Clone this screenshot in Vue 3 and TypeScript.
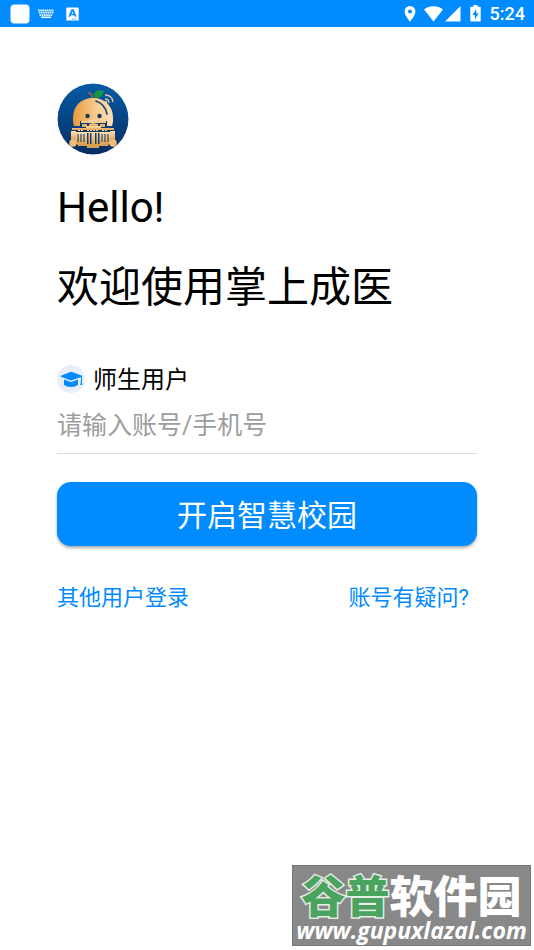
<script setup lang="ts">
import { ref } from 'vue'

const account = ref<string>('')
const columns: number[] = [21, 24, 27, 45, 48, 51]
</script>

<template>
  <div class="screen">
    <header class="status">
      <div class="status-group left">
        <svg width="20" height="20" viewBox="0 0 20 20" aria-hidden="true"><rect x="0.5" y="0.5" width="19" height="19" rx="4" fill="#fff" /></svg>
        <svg width="16" height="10" viewBox="0 0 16 10" aria-hidden="true">
          <g stroke="#fff" stroke-width="1.7" stroke-dasharray="1.7 .5" opacity=".9">
            <path d="M0 1.3h16M.8 3.7h14.6M1.5 6.1h13.2" />
          </g>
          <path d="M3 8.3h10" stroke="#fff" stroke-width="1.5" />
        </svg>
        <svg class="letter" width="13" height="14" viewBox="0 0 13 14" aria-hidden="true">
          <rect x="0.3" y="0.4" width="12.4" height="13.2" rx=".7" fill="#fff" />
          <path d="M3.3 9.7 6 3.2h1l2.7 6.5M4.4 7.5h4.2" fill="none" stroke="#008bff" stroke-width="1.7" />
          <path d="M6 12h5" stroke="#008bff" stroke-width=".8" stroke-dasharray="1 .5" />
        </svg>
      </div>
      <div class="status-group right">
        <svg width="12" height="16" viewBox="0 0 12 16" aria-hidden="true"><path fill="#fff" fill-rule="evenodd" d="M6 0a5.4 5.4 0 0 0-5.4 5.5C.6 9.5 6 15.7 6 15.7s5.4-6.2 5.4-10.2A5.4 5.4 0 0 0 6 0Zm0 3.5a2 2 0 1 1 0 4 2 2 0 0 1 0-4Z" /></svg>
        <svg width="38" height="16" viewBox="0 0 38 16" aria-hidden="true">
          <path fill="#fff" d="M0 3.500c5-4.300 14-4.300 19 0L9.500 15.500ZM36.500 0v15.500H21Z" />
        </svg>
        <svg width="12" height="17" viewBox="0 0 12 17" aria-hidden="true">
          <path fill="#fff" fill-rule="evenodd" d="M3.500 0h4v1.700H10q.7 0 .7.8v13.300q0 .8-.7.8H1q-.7 0-.7-.8V2.500q0-.8.7-.8h2.500ZM6.200 4 2.500 10h2.400v4.500L8.600 8.300H6.200Z" />
        </svg>
        <time>5:24</time>
      </div>
    </header>

    <main class="content">
      <svg class="logo" width="72" height="72" viewBox="0 0 72 72" role="img" aria-label="掌上成医">
        <defs>
          <linearGradient id="sky" x2="0" y2="1"><stop stop-color="#075ba7" /><stop offset="1" stop-color="#052d62" /></linearGradient>
          <linearGradient id="peel"><stop stop-color="#e79a38" /><stop offset=".55" stop-color="#f8c98d" /><stop offset="1" stop-color="#ffdfb4" /></linearGradient>
          <linearGradient id="wall" x2="0" y2="1"><stop stop-color="#ffe1b5" /><stop offset="1" stop-color="#e3a04f" /></linearGradient>
        </defs>
        <circle cx="36" cy="36" r="35.500" fill="url(#sky)" />
        <path d="M17 43c-1-3-1-5-1-8 0-12 8-20 20-20s20 8 20 20c0 3 0 5-1 8Z" fill="url(#peel)" />
        <path d="M31 10q4 0 4 5" fill="none" stroke="#a36239" stroke-width="1.500" />
        <path d="M36 14c1-6 5-8 11-6-1 5-5 9-11 6Z" fill="#159447" />
        <path d="M48 16q4 0 4 4M48 12q7 0 8 7" fill="none" stroke="#e8c69b" stroke-width="1.300" />
        <circle cx="49" cy="19" r="1.200" fill="#e8c69b" />
        <path d="M39 18q9 3 11 13" fill="none" stroke="#14457d" stroke-width="1.700" stroke-linecap="round" />
        <circle cx="30.500" cy="33" r="2.200" fill="#17375f" /><circle cx="42.500" cy="33" r="2.200" fill="#17375f" />
        <path d="M23 38h27v7H23Z" fill="#0a3a73" />
        <path d="M24 38h7l5-1.500L41 38h8v2H24Zm1 3h5v3h-5Zm18 0h5v3h-5ZM32 41l4-1 5 1v2h-9Z" fill="url(#wall)" />
        <path d="M15 45h14v-2h15v2h13v2H15Z" fill="url(#wall)" />
        <path d="M17 47h38v3H17Z" fill="#0b3563" />
        <path d="M18 49h36v12H18Z" fill="url(#wall)" />
        <path d="M21 47.500h6m3 0h12m3 0h6" stroke="#f7cf96" stroke-dasharray="2 1" />
        <g stroke="#123e70" stroke-width="1.100"><path v-for="x in columns" :key="x" :d="`M${x} 51v8`" /></g>
        <path d="M30 50h1.500v11H30Zm3 0h1.500v11H33Zm5 0h1.500v11H38Zm3 0h1.500v11H41Z" fill="#123e70" />
        <path d="M14 48h5v9h-5Zm39 0h5v9h-5Z" fill="url(#wall)" />
        <circle cx="16" cy="60" r="3.700" fill="#f0bc77" /><circle cx="56" cy="60" r="3.700" fill="#f0bc77" />
        <path d="M20 61h32l-1 2H21Zm10 2h12v2H30Z" fill="#dc9d54" />
      </svg>

      <h1><span>Hello!</span><span>欢迎使用掌上成医</span></h1>

      <form @submit.prevent>
        <label class="user-type" for="account">
          <svg width="28" height="28" viewBox="0 0 28 28" aria-hidden="true">
            <circle cx="14" cy="14" r="14" fill="#e9eff8" />
            <path fill="#008bff" d="m13 7q1-.4 2 0l9.500 3.600q.5.200.5.700v6h-1.100v-5.400l-8.900 3.300q-1 .4-2 0l-9-3.500q-1.200-.5 0-1ZM7 14.600l6 2.200q1 .4 2 0l6-2.200v5.200c-3.800 3-10.200 3-14 0Zm16.700 2.100q1.500.2 1.300 1.300l.4 2h-2.200l.5-2Z" />
          </svg>
          <span>师生用户</span>
        </label>
        <input id="account" v-model="account" type="text" placeholder="请输入账号/手机号" />
        <button type="submit">开启智慧校园</button>
      </form>

      <nav class="links">
        <a href="#other">其他用户登录</a>
        <a href="#help">账号有疑问?</a>
      </nav>
    </main>

    <aside class="watermark">
      <div class="brand"><span class="green">谷普</span>软件园</div>
      <div class="site">www.gupuxlazal.com</div>
    </aside>
  </div>
</template>

<style>
body { background: #fff; }
</style>

<style scoped>
* { box-sizing: border-box; }
.screen {
  position: relative;
  min-height: 100vh;
  color: #000;
  font-family: Roboto, "Noto Sans CJK SC", sans-serif;
  overflow: hidden;
}
svg { display: block; flex: none; }
.status {
  display: flex;
  justify-content: space-between;
  height: 27px;
  padding: 0 9px 0 10px;
  background: #008bff;
  color: #fff;
}
.status-group { display: flex; align-items: center; gap: 8px; }
.letter { margin-left: 4px; }
time { font-size: 18px; line-height: 27px; font-weight: 500; }
.content { padding: 56px 57px 0; }
.logo { border-radius: 50%; }
h1 { margin: 13px 0 0; font-size: 42px; font-weight: 400; line-height: 80px; }
h1 span { display: block; }
form { display: flex; flex-direction: column; margin-top: 32px; }
.user-type { display: flex; align-items: center; gap: 8px; font-size: 24px; line-height: 38px; }
.user-type span { padding-top: 2px; line-height: 36px; }
input {
  width: 100%;
  height: 56px;
  padding: 0;
  border: 0;
  border-bottom: 1px solid #ddd;
  border-radius: 0;
  outline: none;
  background: transparent;
  color: #000;
  font: 400 25px/36px Roboto, "Noto Sans CJK SC", sans-serif;
}
input::placeholder { color: #9d9d9d; opacity: 1; }
button {
  height: 64px;
  margin-top: 28px;
  padding: 3px 0 0;
  border: 0;
  border-radius: 14px;
  background: #008bff;
  box-shadow: 0 2px 3px #0005;
  color: #fff;
  font: 400 30px/60px Roboto, "Noto Sans CJK SC", sans-serif;
}
.links {
  display: flex;
  justify-content: space-between;
  margin-top: 36px;
  padding-right: 8px;
  font-size: 22px;
  line-height: 32px;
}
.links a { color: #008bff; text-decoration: none; }
.watermark {
  position: absolute;
  right: 3px;
  bottom: 4px;
  width: 239px;
  height: 81px;
  padding-top: 6px;
  background: #888;
  border: 1px solid #777;
  color: #fff;
  text-align: center;
  white-space: nowrap;
}
.brand { font: 900 44px/44px "Noto Sans CJK SC", sans-serif; }
.green { color: #4aa35f; -webkit-text-stroke: 3px #e5eee5; paint-order: stroke fill; }
.site { font: italic 700 23px/28px "Open Sans", "Noto Sans", sans-serif; }
</style>
